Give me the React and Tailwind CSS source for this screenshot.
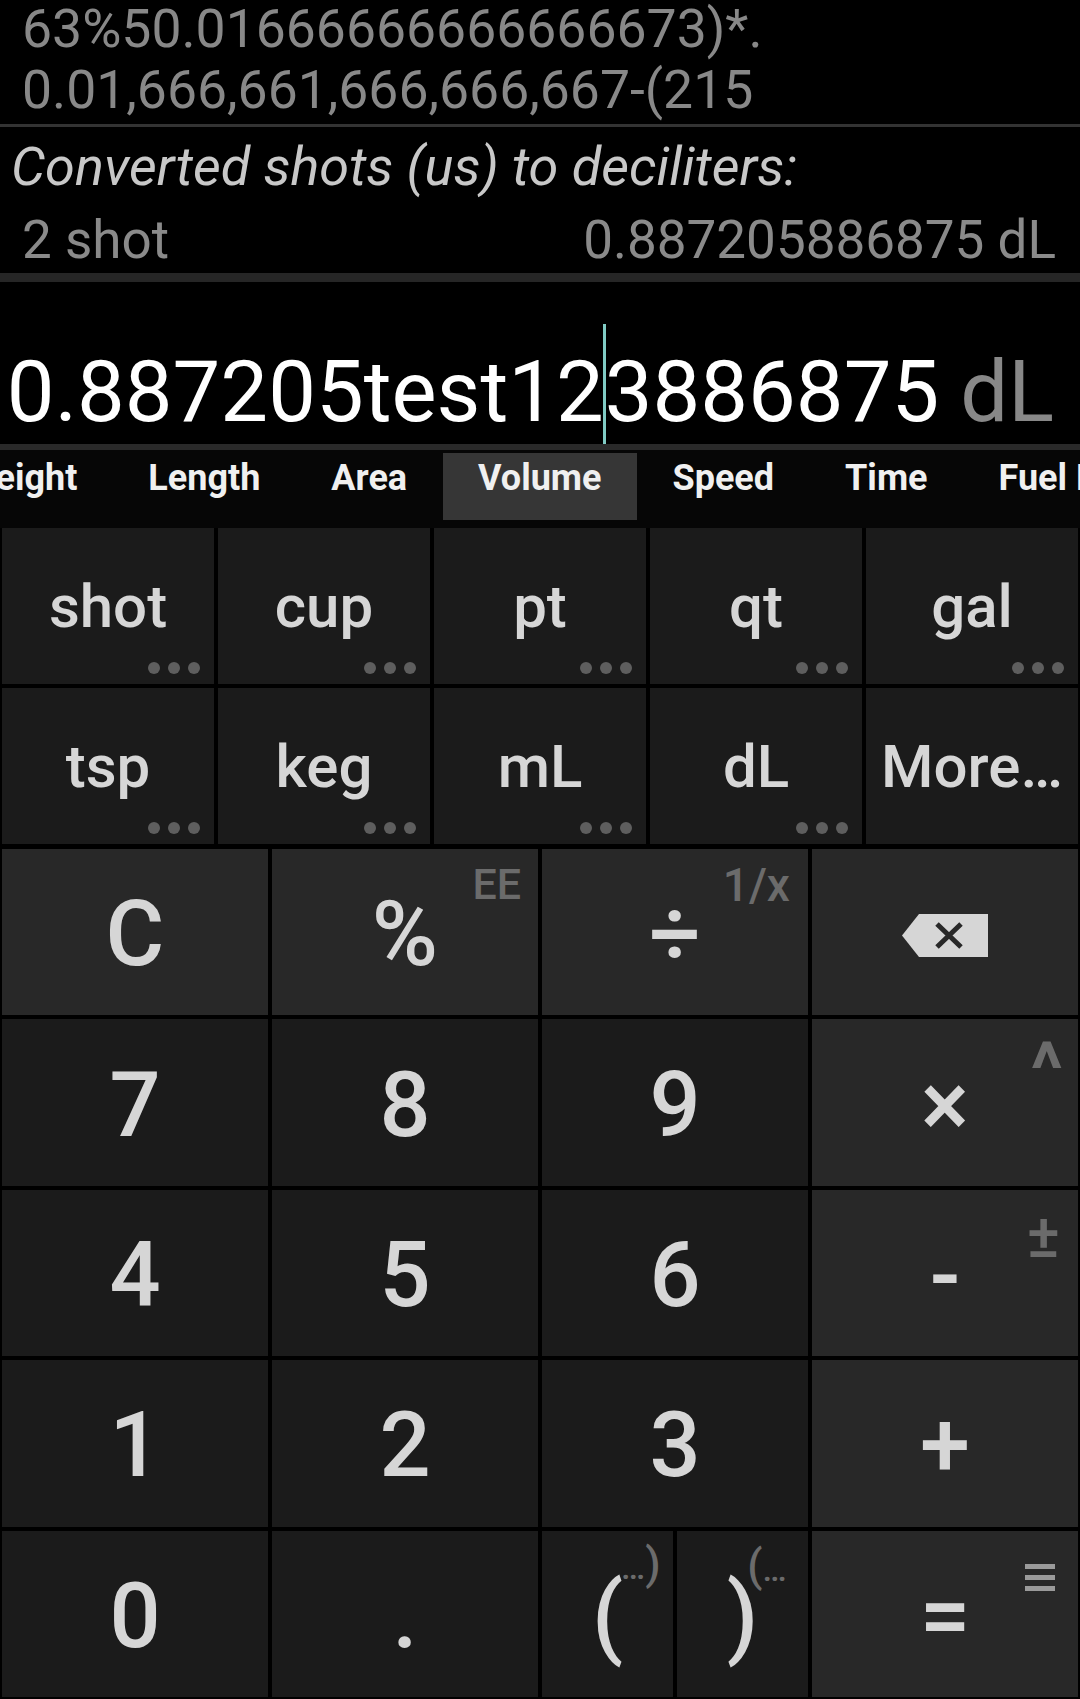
import React from 'react';

const units = [
  ['shot', true], ['cup', true], ['pt', true], ['qt', true], ['gal', true],
  ['tsp', true], ['keg', true], ['mL', true], ['dL', true], ['More…', false],
];

const tabs = ['Weight', 'Length', 'Area', 'Volume', 'Speed', 'Time', 'Fuel Economy'];

function Dots() {
  return (
    <div className="absolute bottom-[10px] right-[14px] flex gap-[8px]">
      <span className="w-[12px] h-[12px] rounded-full bg-[#5e5e5e]" />
      <span className="w-[12px] h-[12px] rounded-full bg-[#5e5e5e]" />
      <span className="w-[12px] h-[12px] rounded-full bg-[#5e5e5e]" />
    </div>
  );
}

function Key({ children, dark, className = '', sup }) {
  return (
    <div className={`relative flex items-center justify-center pt-[6px] text-[90px] leading-none font-medium text-[#d6d6d6] ${dark ? 'bg-[#1b1b1b]' : 'bg-[#282828]'} ${className}`}>
      {children}
      {sup}
    </div>
  );
}

function Backspace() {
  return (
    <svg width="86" height="43" viewBox="0 0 86 43">
      <path d="M0 21.5 L17 0 H86 V43 H17 Z" fill="#d6d6d6" />
      <path d="M35 10 L59 33 M59 10 L35 33" stroke="#282828" strokeWidth="5" />
    </svg>
  );
}

export default function App() {
  return (
    <div className="w-[1080px] h-[1699px] bg-black overflow-hidden font-[Roboto,sans-serif] flex flex-col">
      {/* history */}
      <div className="h-[124px] flex flex-col justify-end pb-[4px] px-[22px] text-[53.5px] leading-[61px] text-[#888] whitespace-nowrap overflow-hidden">
        <div>63%50.01666666666666673)*.</div>
        <div>0.01,666,661,666,666,667-(215</div>
      </div>
      <div className="h-[3px] bg-[#333]" />

      {/* conversion */}
      <div className="h-[146px] pt-[10px] leading-[60px] whitespace-nowrap">
        <div className="pl-[11px] text-[54px] italic text-[#c8c8c8]">Converted shots (us) to deciliters:</div>
        <div className="mt-[13px] flex justify-between pl-[22px] pr-[24px] text-[53px] text-[#8a8a8a]">
          <span>2 shot</span>
          <span>0.887205886875 dL</span>
        </div>
      </div>
      <div className="h-[9px] bg-[#262626]" />

      {/* display */}
      <div className="h-[162px] flex items-end justify-end pr-[26px] pb-[9px] text-[85px] leading-none whitespace-nowrap text-white">
        <span>0.887205test12</span>
        <span className="w-[3px] h-[120px] -mx-px mb-[-9px] bg-[#80cbc4] shrink-0" />
        <span>3886875</span>
        <span className="text-[#888]">&nbsp;dL</span>
      </div>
      <div className="h-[6px] bg-[#2a2a2a]" />

      {/* tabs */}
      <div className="h-[78px] bg-[#060606] pt-[3px] overflow-hidden">
        <div className="flex ml-[-71px]">
          {tabs.map(t => (
            <div key={t}
              className={`h-[67px] px-[35.5px] pt-[7px] shrink-0 text-[36px] leading-none font-bold text-[#f0f0f0] whitespace-nowrap ${t === 'Volume' ? 'bg-[#363636]' : ''}`}>
              {t}
            </div>
          ))}
        </div>
      </div>

      {/* unit keys */}
      <div className="grid grid-cols-5 gap-[4px] px-[2px] pb-[5px]">
        {units.map(([u, more]) => (
          <div key={u} className="relative h-[156px] bg-[#1b1b1b] flex items-center justify-center pt-[1px] text-[60px] leading-none font-medium text-[#d6d6d6]">
            {u}
            {more && <Dots />}
          </div>
        ))}
      </div>

      {/* keypad */}
      <div className="flex-1 grid grid-cols-4 grid-rows-5 gap-[4px] px-[2px] pb-[2px]">
        <Key>C</Key>
        <Key sup={<span className="absolute top-[14px] right-[17px] text-[43px] text-[#6b6b6b]">EE</span>}>%</Key>
        <Key sup={<span className="absolute top-[13px] right-[18px] text-[46px] text-[#6b6b6b]">1/x</span>}>÷</Key>
        <Key><Backspace /></Key>

        <Key dark>7</Key>
        <Key dark>8</Key>
        <Key dark>9</Key>
        <Key sup={<span className="absolute top-[13px] right-[15px] text-[74px] font-bold text-[#6b6b6b]">^</span>}>×</Key>

        <Key dark>4</Key>
        <Key dark>5</Key>
        <Key dark>6</Key>
        <Key sup={<span className="absolute top-[15px] right-[18px] text-[62px] text-[#6b6b6b]">±</span>}>-</Key>

        <Key dark>1</Key>
        <Key dark>2</Key>
        <Key dark>3</Key>
        <Key>+</Key>

        <Key dark>0</Key>
        <Key dark>.</Key>
        <div className="grid grid-cols-2 gap-[4px]">
          <Key dark>
            <span className="relative">
              (
              <span className="absolute left-[calc(100%-2px)] top-[-30px] text-[44px] text-[#6b6b6b] whitespace-nowrap">
                <span className="text-[34px]">…</span>)
              </span>
            </span>
          </Key>
          <Key dark>
            <span className="relative">
              )
              <span className="absolute left-[calc(100%-11px)] top-[-28px] text-[44px] text-[#6b6b6b] whitespace-nowrap">
                (<span className="text-[34px]">…</span>
              </span>
            </span>
          </Key>
        </div>
        <Key className="bg-[#1a6b19]" sup={
          <div className="absolute top-[33px] right-[23px] flex flex-col gap-[6px]">
            <span className="w-[30px] h-[5px] bg-[#9a9a9a]" />
            <span className="w-[30px] h-[5px] bg-[#9a9a9a]" />
            <span className="w-[30px] h-[5px] bg-[#9a9a9a]" />
          </div>
        }>=</Key>
      </div>
    </div>
  );
}
